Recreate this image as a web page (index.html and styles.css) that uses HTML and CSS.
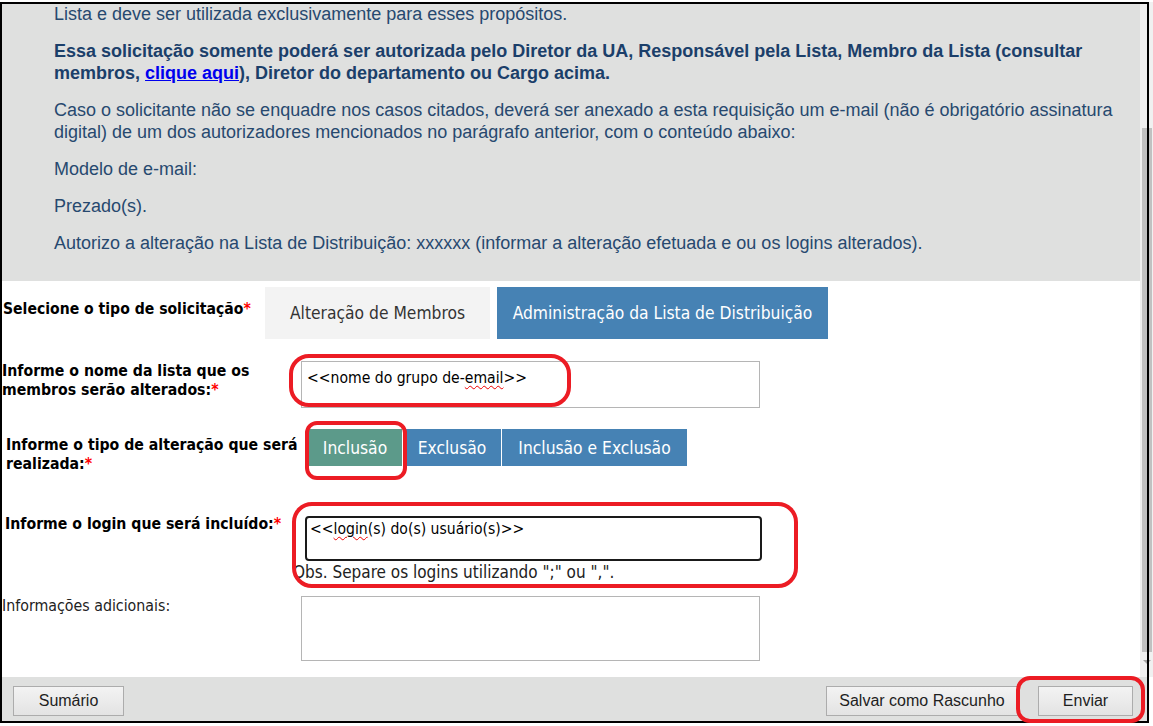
FILE: index.html
```html
<!DOCTYPE html>
<html lang="pt-BR">
<head>
<meta charset="utf-8">
<title>Solicitação - Lista de Distribuição</title>
<link rel="stylesheet" href="styles.css">
</head>
<body>
<div class="page">
  <div class="main">
    <div class="content">
      <div class="info">
        <p>Lista e deve ser utilizada exclusivamente para esses propósitos.</p>
        <p class="strong"><span>Essa solicitação somente poderá ser autorizada pelo Diretor da UA, Responsável pela Lista, Membro da Lista (consultar</span><br><span>membros, </span><a href="#">clique aqui</a><span>), Diretor do departamento ou Cargo acima.</span></p>
        <p>Caso o solicitante não se enquadre nos casos citados, deverá ser anexado a esta requisição um e-mail (não é obrigatório assinatura digital) de um dos autorizadores mencionados no parágrafo anterior, com o conteúdo abaixo:</p>
        <p>Modelo de e-mail:</p>
        <p>Prezado(s).</p>
        <p>Autorizo a alteração na Lista de Distribuição: xxxxxx (informar a alteração efetuada e ou os logins alterados).</p>
      </div>
      <div class="form">
        <div class="row row-type">
          <div class="label label-type">Selecione o tipo de solicitação<span class="req">*</span></div>
          <div class="seg-lg seg-light">Alteração de Membros</div>
          <div class="seg-lg seg-blue">Administração da Lista de Distribuição</div>
        </div>
        <div class="row row-name">
          <div class="label label-name">Informe o nome da lista que os<br>membros serão alterados:<span class="req">*</span></div>
          <div class="field field-name">&lt;&lt;nome do grupo de-<span class="spell">email</span>&gt;&gt;</div>
        </div>
        <div class="row row-kind">
          <div class="label label-kind">Informe o tipo de alteração que será<br>realizada:<span class="req">*</span></div>
          <div class="segs">
            <div class="seg seg-active seg-w1">Inclusão</div>
            <div class="seg seg-w2">Exclusão</div>
            <div class="seg seg-w3">Inclusão e Exclusão</div>
          </div>
        </div>
        <div class="row row-login">
          <div class="label label-login">Informe o login que será incluído:<span class="req">*</span></div>
          <div class="login-box">
            <div class="field field-login">&lt;&lt;<span class="spell">login</span>(s) do(s) usuário(s)&gt;&gt;</div>
            <div class="hint">Obs. Separe os logins utilizando ";" ou ",".</div>
          </div>
        </div>
        <div class="row row-extra">
          <div class="label label-extra">Informações adicionais:</div>
          <div class="field field-extra"></div>
        </div>
      </div>
    </div>
    <div class="scrollbar">
      <div class="thumb"></div>
      <div class="arrow-down"></div>
    </div>
  </div>
  <div class="footer">
    <div class="btn btn-summary">Sumário</div>
    <div class="footer-spacer"></div>
    <div class="btn btn-draft">Salvar como Rascunho</div>
    <div class="btn btn-send">Enviar</div>
  </div>
</div>

<div class="frame"></div>
<div class="mark mark-name"></div>
<div class="mark mark-incl"></div>
<div class="mark mark-login"></div>
<div class="mark mark-send"></div>
</body>
</html>
```
FILE: styles.css
```css
* { box-sizing: border-box; }
html, body { margin: 0; padding: 0; background: #fff; }
body {
  width: 1153px;
  height: 726px;
  overflow: hidden;
  position: relative;
  font-family: "Liberation Sans", Arial, sans-serif;
}

.page {
  display: flex;
  flex-direction: column;
  padding-top: 2px;
  padding-left: 2px;
}

.main { display: flex; height: 675px; }

.content {
  width: 1138px;
  display: flex;
  flex-direction: column;
  overflow: hidden;
}

/* Info panel */
.info {
  background: #dfe0df;
  height: 279px;
  flex: none;
  padding: 1px 22px 0 52px;
  color: #27496f;
  font-size: 18px;
  line-height: 22px;
}
.info p { margin: 0 0 15px; }
.info .strong { font-weight: bold; color: #1b3f6a; }
.info a { color: #0000ee; text-decoration: underline; }

/* Form */
.form {
  font-family: "DejaVu Sans Condensed", "DejaVu Sans", sans-serif;
  color: #000;
}
.row { display: flex; align-items: flex-start; }
.label {
  font-weight: bold;
  font-size: 15.7px;
  line-height: 19px;
  flex: none;
}
.req { color: #f00; }

.row-type { margin-top: 6px; align-items: center; }
.label-type { padding-left: 1px; width: 263px; padding-bottom: 8px; font-size: 15.6px; }
.seg-lg {
  height: 52px;
  display: flex;
  align-items: center;
  justify-content: center;
  font-size: 17.3px;
}
.seg-light { width: 225px; margin-right: 7px; background: #f3f3f3; color: #333; }
.seg-blue { width: 331px; background: #4682b4; color: #fff; }

.row-name { margin-top: 22px; }
.label-name { width: 299px; }
.field {
  background: #fff;
  border: 1px solid #b5b5b5;
  font-size: 15.6px;
  line-height: 19px;
  color: #000;
}
.field-name { width: 459px; height: 47px; padding: 7px 5px; }
.spell {
  text-decoration: underline wavy #e00;
  text-decoration-thickness: 1px;
  text-underline-offset: 2px;
}

.row-kind { margin-top: 21px; }
.label-kind { padding-left: 4px; width: 306px; padding-top: 6px; }
.segs { display: flex; gap: 1px; }
.seg {
  height: 37px;
  display: flex;
  align-items: center;
  justify-content: center;
  background: #4682b4;
  color: #fff;
  font-size: 17.3px;
}
.seg-active { background: #5c9a8a; }
.seg-w1 { width: 94px; }
.seg-w2 { width: 98px; }
.seg-w3 { width: 185px; }

.row-login { margin-top: 43px; }
.label-login { padding-left: 3px; width: 291px; margin-top: -2px; }
.login-box { display: flex; flex-direction: column; }
.field-login {
  margin-left: 12px;
  width: 457px;
  height: 45px;
  border: 2px solid #1a1a1a;
  border-radius: 4px;
  padding: 2px 3px;
}
.hint {
  margin-top: 1px;
  font-size: 17px;
  line-height: 20px;
  color: #222;
}

.row-extra { margin-top: 14px; }
.label-extra { width: 299px; font-weight: normal; font-size: 15.8px; color: #222; }
.field-extra { width: 459px; height: 65px; }

/* Scrollbar */
.scrollbar {
  width: 13px;
  background: #f0f0f0;
  display: flex;
  flex-direction: column;
}
.thumb {
  margin-top: 126px;
  margin-left: 2px;
  width: 10px;
  height: 524px;
  background: #c1c1c1;
}
.arrow-down {
  width: 0;
  height: 0;
  margin: 8px 0 0 3px;
  border-left: 4px solid transparent;
  border-right: 4px solid transparent;
  border-top: 4px solid #a3a3a3;
}

/* Footer */
.footer {
  width: 1146px;
  height: 44px;
  background: #dfe0df;
  display: flex;
  align-items: flex-start;
  padding: 9px 15px 0 11px;
}
.footer-spacer { flex: 1; }
.btn {
  height: 30px;
  display: flex;
  align-items: center;
  justify-content: center;
  border: 1px solid #acacac;
  background: linear-gradient(#f3f3f3, #e3e3e3);
  color: #1e1e1e;
  font-family: "Liberation Sans", Arial, sans-serif;
  font-size: 16px;
}
.btn-summary { width: 111px; }
.btn-draft { width: 192px; margin-right: 20px; }
.btn-send { width: 95px; }

/* Screenshot frame and red annotation marks (overlays) */
.frame {
  position: absolute;
  left: 0;
  top: 2px;
  width: 1149px;
  height: 721px;
  border: 2px solid #000;
  pointer-events: none;
}
.mark {
  position: absolute;
  border: 4px solid #ec1c24;
  pointer-events: none;
}
.mark-name { left: 289px; top: 354px; width: 282px; height: 53px; border-radius: 20px; }
.mark-incl { left: 305px; top: 421px; width: 102px; height: 59px; border-radius: 12px; }
.mark-login { left: 292px; top: 502px; width: 506px; height: 86px; border-radius: 20px; }
.mark-send { left: 1016px; top: 676px; width: 129px; height: 47px; border-radius: 14px; }
```
